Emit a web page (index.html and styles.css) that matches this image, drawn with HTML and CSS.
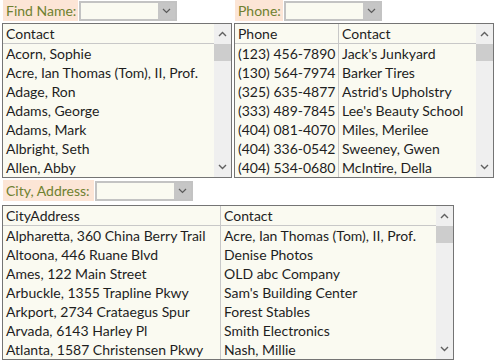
FILE: index.html
```html
<!DOCTYPE html>
<html lang="en">
<head>
<meta charset="UTF-8">
<title>Contact Lookup</title>
<link rel="stylesheet" href="styles.css">
</head>
<body>

<div class="form">
  <div class="top">
    <!-- Find by name -->
    <div class="panel panelName">
      <div class="field">
        <span class="caption">Find Name:</span>
        <div class="combo comboName">
          <span class="comboText"></span>
          <span class="comboButton"><svg width="9" height="6" viewBox="0 0 9 6"><polyline points="1,1 4.5,4.5 8,1" fill="none" stroke="#5a5a5a" stroke-width="1.2"/></svg></span>
        </div>
      </div>
      <div class="list">
        <table class="grid">
          <thead><tr><th>Contact</th></tr></thead>
          <tbody>
            <tr><td>Acorn, Sophie</td></tr>
            <tr><td>Acre, Ian Thomas (Tom), II, Prof.</td></tr>
            <tr><td>Adage, Ron</td></tr>
            <tr><td>Adams, George</td></tr>
            <tr><td>Adams, Mark</td></tr>
            <tr><td>Albright, Seth</td></tr>
            <tr><td>Allen, Abby</td></tr>
          </tbody>
        </table>
        <div class="scroll">
          <span class="arrow"><svg width="9" height="6" viewBox="0 0 9 6"><polyline points="1,5 4.5,1.5 8,5" fill="none" stroke="#606060" stroke-width="1.4"/></svg></span>
          <span class="thumb"></span>
          <span class="track"></span>
          <span class="arrow"><svg width="9" height="6" viewBox="0 0 9 6"><polyline points="1,1 4.5,4.5 8,1" fill="none" stroke="#606060" stroke-width="1.4"/></svg></span>
        </div>
      </div>
    </div>

    <!-- Find by phone -->
    <div class="panel panelPhone">
      <div class="field">
        <span class="caption">Phone:</span>
        <div class="combo comboPhone">
          <span class="comboText"></span>
          <span class="comboButton"><svg width="9" height="6" viewBox="0 0 9 6"><polyline points="1,1 4.5,4.5 8,1" fill="none" stroke="#5a5a5a" stroke-width="1.2"/></svg></span>
        </div>
      </div>
      <div class="list">
        <table class="grid">
          <thead><tr><th class="colPhone">Phone</th><th>Contact</th></tr></thead>
          <tbody>
            <tr><td class="colPhone">(123) 456-7890</td><td>Jack's Junkyard</td></tr>
            <tr><td class="colPhone">(130) 564-7974</td><td>Barker Tires</td></tr>
            <tr><td class="colPhone">(325) 635-4877</td><td>Astrid's Upholstry</td></tr>
            <tr><td class="colPhone">(333) 489-7845</td><td>Lee's Beauty School</td></tr>
            <tr><td class="colPhone">(404) 081-4070</td><td>Miles, Merilee</td></tr>
            <tr><td class="colPhone">(404) 336-0542</td><td>Sweeney, Gwen</td></tr>
            <tr><td class="colPhone">(404) 534-0680</td><td>McIntire, Della</td></tr>
          </tbody>
        </table>
        <div class="scroll">
          <span class="arrow"><svg width="9" height="6" viewBox="0 0 9 6"><polyline points="1,5 4.5,1.5 8,5" fill="none" stroke="#606060" stroke-width="1.4"/></svg></span>
          <span class="thumb"></span>
          <span class="track"></span>
          <span class="arrow"><svg width="9" height="6" viewBox="0 0 9 6"><polyline points="1,1 4.5,4.5 8,1" fill="none" stroke="#606060" stroke-width="1.4"/></svg></span>
        </div>
      </div>
    </div>
  </div>

  <!-- Find by city / address -->
  <div class="panel panelCity">
    <div class="field">
      <span class="caption">City, Address:</span>
      <div class="combo comboCity">
        <span class="comboText"></span>
        <span class="comboButton"><svg width="9" height="6" viewBox="0 0 9 6"><polyline points="1,1 4.5,4.5 8,1" fill="none" stroke="#5a5a5a" stroke-width="1.2"/></svg></span>
      </div>
    </div>
    <div class="list">
      <table class="grid">
        <thead><tr><th class="colCity">CityAddress</th><th>Contact</th></tr></thead>
        <tbody>
          <tr><td class="colCity">Alpharetta, 360 China Berry Trail</td><td>Acre, Ian Thomas (Tom), II, Prof.</td></tr>
          <tr><td class="colCity">Altoona, 446 Ruane Blvd</td><td>Denise Photos</td></tr>
          <tr><td class="colCity">Ames, 122 Main Street</td><td>OLD abc Company</td></tr>
          <tr><td class="colCity">Arbuckle, 1355 Trapline Pkwy</td><td>Sam's Building Center</td></tr>
          <tr><td class="colCity">Arkport, 2734 Crataegus Spur</td><td>Forest Stables</td></tr>
          <tr><td class="colCity">Arvada, 6143 Harley Pl</td><td>Smith Electronics</td></tr>
          <tr><td class="colCity">Atlanta, 1587 Christensen Pkwy</td><td>Nash, Millie</td></tr>
        </tbody>
      </table>
      <div class="scroll">
        <span class="arrow"><svg width="9" height="6" viewBox="0 0 9 6"><polyline points="1,5 4.5,1.5 8,5" fill="none" stroke="#606060" stroke-width="1.4"/></svg></span>
        <span class="thumb"></span>
        <span class="track"></span>
        <span class="arrow"><svg width="9" height="6" viewBox="0 0 9 6"><polyline points="1,1 4.5,4.5 8,1" fill="none" stroke="#606060" stroke-width="1.4"/></svg></span>
      </div>
    </div>
  </div>
</div>

</body>
</html>
```

FILE: styles.css
```css
body {
  margin: 0;
  background-color: #ffffff;
  font-family: Lato, "Liberation Sans", sans-serif;
  font-size: 14px;
  color: #1e1e1e;
}

.form {
  padding: 0 2px;
}

.top {
  display: flex;
  gap: 2px;
}

.panelName { width: 230px; }
.panelPhone { width: 260px; }
.panelCity { width: 452px; margin-top: 2px; }

/* caption + combo box row */
.field {
  display: flex;
  align-items: center;
  height: 21px;
  padding-left: 1px;
  gap: 1px;
}

.caption {
  background-color: #fce5d6; /* peach label */
  color: #6f8130;
  height: 21px;
  line-height: 21px;
  padding: 0 2px 0 3px;
  white-space: nowrap;
}

.panelCity .caption { padding-right: 4px; }

.combo {
  display: flex;
  height: 20px;
  box-sizing: border-box;
  border: 2px solid #c3c3c3;
  background-color: #fafaf1;
}
.comboName { width: 98px; }
.comboPhone { width: 98px; }
.comboCity { width: 98px; }

.comboText { flex: 1; }

.comboButton {
  width: 17px;
  background-color: #c6c6c6;
  display: flex;
  align-items: center;
  justify-content: center;
}

/* list box */
.list {
  display: flex;
  height: 155px;
  box-sizing: border-box;
  margin-top: 2px;
  border: 1px solid #747474;
  background-color: #fafaf1;
}
.panelCity .list { margin-top: 4px; }

.grid {
  flex: 1;
  align-self: flex-start;
  border-collapse: separate;
  border-spacing: 0;
}

.grid th {
  height: 19px;
  padding: 0 0 0 3px;
  font-weight: normal;
  text-align: left;
  border-bottom: 1px solid #c8c8c8;
}

.grid td {
  height: 19px;
  padding: 0 0 0 3px;
  white-space: nowrap;
}

.grid th + th, .grid td + td {
  border-left: 1px solid #c8c8c8;
}

.colPhone { width: 100px; }
.colCity { width: 214px; }

.scroll {
  width: 17px;
  display: flex;
  flex-direction: column;
  background-color: #efefef;
}

.arrow {
  height: 20px;
  display: flex;
  align-items: center;
  justify-content: center;
}

.thumb {
  height: 17px;
  background-color: #cdcdcd;
}

.track { flex: 1; }
```
